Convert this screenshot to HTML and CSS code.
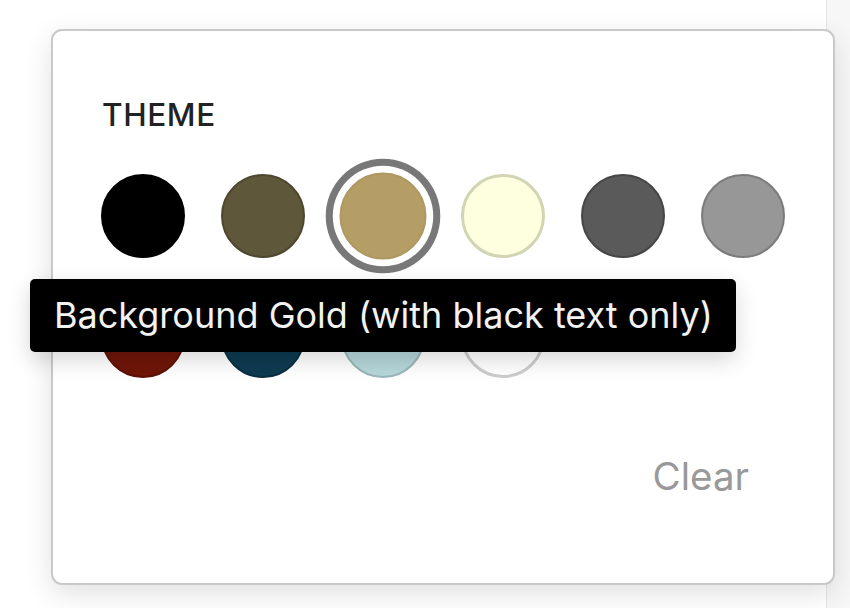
FILE: index.html
```html
<!DOCTYPE html>
<html lang="en">
<head>
<meta charset="utf-8">
<title>Theme picker</title>
<link rel="stylesheet" href="styles.css">
</head>
<body>
<div class="page">
  <main class="main">
    <section class="card">
      <h2 class="title">THEME</h2>
      <div class="swatches">
        <button class="swatch sw-black" aria-label="Black"></button>
        <button class="swatch sw-olive" aria-label="Olive"></button>
        <button class="swatch sw-gold selected" aria-label="Background Gold"></button>
        <button class="swatch sw-cream" aria-label="Cream"></button>
        <button class="swatch sw-dark" aria-label="Dark grey"></button>
        <button class="swatch sw-grey" aria-label="Grey"></button>
        <button class="swatch sw-red" aria-label="Red"></button>
        <button class="swatch sw-navy" aria-label="Navy"></button>
        <button class="swatch sw-ice" aria-label="Ice blue"></button>
        <button class="swatch sw-white" aria-label="White"></button>
      </div>
      <div class="footer">
        <button class="clear">Clear</button>
      </div>
      <div class="tooltip">Background Gold (with black text only)</div>
    </section>
  </main>
  <aside class="side"></aside>
</div>
</body>
</html>
```

FILE: styles.css
```css
html, body {
  margin: 0;
  padding: 0;
  background: #ffffff;
}
body {
  width: 850px;
  height: 608px;
  overflow: hidden;
  font-family: Inter, "Liberation Sans", sans-serif;
}
.page {
  display: flex;
  height: 608px;
}
.main {
  width: 826px;
  flex: none;
  padding: 29px 0 0 51px;
  box-sizing: border-box;
  position: relative;
  z-index: 1;
}
.side {
  flex: 1;
  background: #f7f7f7;
  border-left: 1px solid #e6e6e6;
}
.card {
  position: relative;
  width: 784px;
  height: 556px;
  box-sizing: border-box;
  border: 2px solid #c9c9c9;
  border-radius: 11px;
  background: #ffffff;
  box-shadow: 0 9px 28px rgba(0, 0, 0, 0.12);
  padding: 68px 48px 0 48px;
}
.title {
  margin: 0 0 43px 1px;
  font-size: 31.5px;
  line-height: 32px;
  font-weight: 500;
  color: #222222;
  letter-spacing: 0.6px;
}
.swatches {
  display: grid;
  grid-template-columns: repeat(6, 84px);
  grid-auto-rows: 84px;
  gap: 36px;
}
.swatch {
  width: 84px;
  height: 84px;
  padding: 0;
  margin: 0;
  border-radius: 50%;
  border: 2px solid transparent;
  box-sizing: border-box;
  cursor: pointer;
}
.sw-black { background: #000000; border-color: #000000; }
.sw-olive { background: #5f5739; border-color: #4e4730; }
.sw-gold  { background: #b59d66; border-color: #b09862; }
.sw-cream { background: #fdffdf; border: 3px solid #d2d4b3; }
.sw-dark  { background: #5a5a5a; border-color: #464646; }
.sw-grey  { background: #979797; border-color: #7b7b7b; }
.sw-red   { background: #6f1608; border-color: #5c1206; }
.sw-navy  { background: #0e3b51; border-color: #0a2f41; }
.sw-ice   { background: #b6d7db; border-color: #9ab6b9; }
.sw-white { background: #ffffff; border: 3px solid #cccccc; }
.swatch.selected {
  transform: scale(1.036);
  box-shadow: 0 0 0 6.5px #ffffff, 0 0 0 13.3px #787878;
}
.footer {
  display: flex;
  justify-content: flex-end;
  margin-top: 74px;
}
.clear {
  margin: 0 36px 0 0;
  padding: 0;
  border: 0;
  background: none;
  font-family: Inter, "Liberation Sans", sans-serif;
  font-size: 38.5px;
  line-height: 48px;
  color: #999999;
  cursor: pointer;
}
.tooltip {
  position: absolute;
  left: -23px;
  top: 248px;
  width: 706px;
  height: 73px;
  padding: 0 0 0 24px;
  box-sizing: border-box;
  background: #000000;
  color: #f2f2f2;
  border-radius: 5px;
  font-size: 36px;
  line-height: 73px;
  white-space: nowrap;
  box-shadow: 0 8px 22px rgba(0, 0, 0, 0.16);
}
```
